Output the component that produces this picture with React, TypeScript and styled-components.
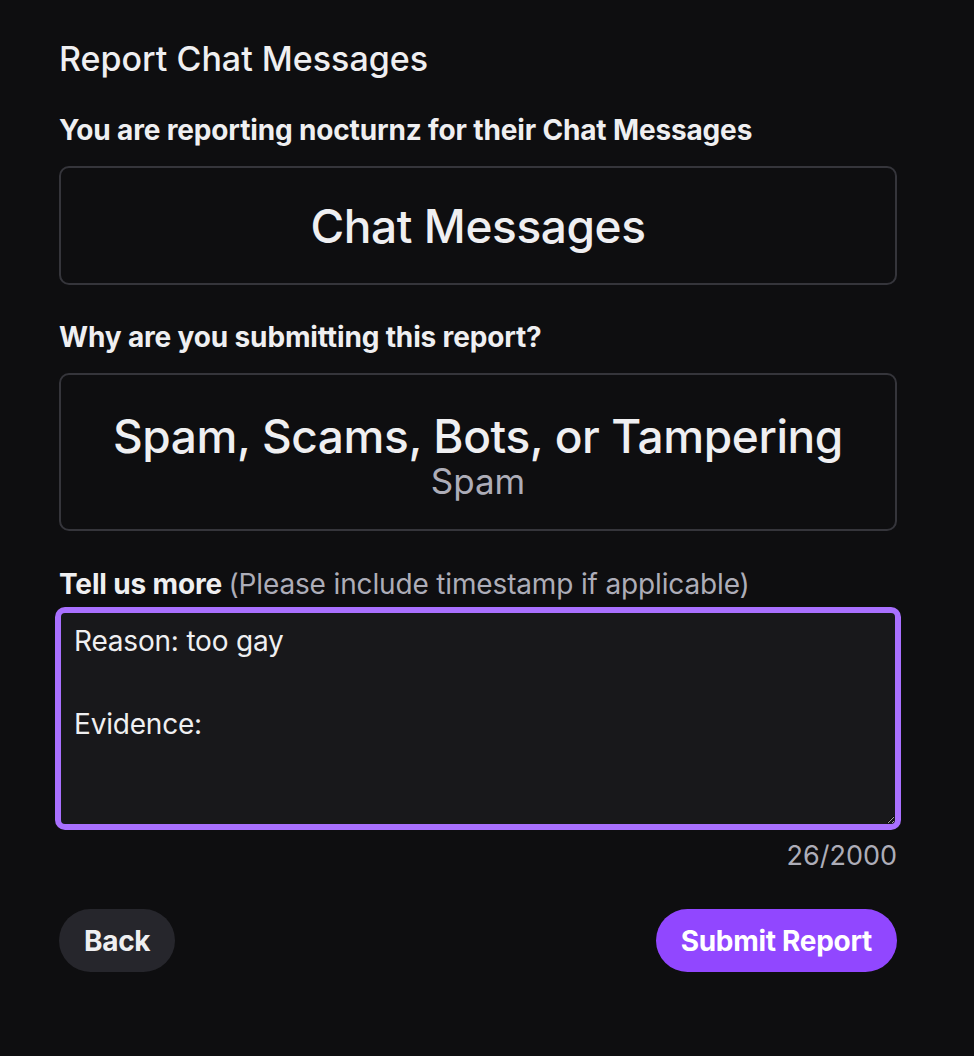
import React from 'react'
import styled, { createGlobalStyle } from 'styled-components'

const GlobalStyle = createGlobalStyle`
  html, body {
    margin: 0;
    padding: 0;
    background: #0e0e10;
  }
  body {
    font-family: Inter, "Noto Sans", sans-serif;
    color: #efeff1;
  }
`

const Page = styled.div`
  min-height: 1056px;
  background: #0e0e10;
  padding: 39px 0 0 59px;
  box-sizing: border-box;
`

const Form = styled.div`
  width: 838px;
  display: flex;
  flex-direction: column;
`

const Title = styled.h1`
  margin: 0;
  font-size: 34px;
  line-height: 40px;
  font-weight: 500;
`

const Label = styled.div<{ $gap: number }>`
  margin-top: ${(p) => p.$gap}px;
  font-size: 28px;
  line-height: 32px;
  font-weight: 700;
  letter-spacing: -0.15px;
`

const Hint = styled.span`
  font-weight: 400;
  color: #adadb8;
`

const Card = styled.div<{ $height: number; $shift?: number }>`
  margin-top: 20px;
  height: ${(p) => p.$height}px;
  padding-top: ${(p) => p.$shift ?? 0}px;
  border: 2px solid #35353b;
  border-radius: 10px;
  box-sizing: border-box;
  display: flex;
  flex-direction: column;
  align-items: center;
  justify-content: center;
`

const CardTitle = styled.div`
  font-size: 46px;
  line-height: 50px;
  font-weight: 500;
  letter-spacing: -0.4px;
`

const CardSub = styled.div`
  font-size: 35px;
  line-height: 40px;
  font-weight: 400;
  color: #adadb8;
`

const TextArea = styled.textarea`
  margin-top: 11px;
  height: 215px;
  box-sizing: border-box;
  background: #18181b;
  color: #efeff1;
  border: 2px solid #a970ff;
  box-shadow: 0 0 0 4px #a970ff;
  border-radius: 6px;
  padding: 8px 13px;
  font-family: Inter, "Noto Sans", sans-serif;
  font-size: 28px;
  line-height: 41.5px;
  letter-spacing: -0.2px;
  outline: none;
  resize: vertical;
`

const Counter = styled.div`
  margin-top: 15px;
  text-align: right;
  font-size: 27px;
  line-height: 30px;
  color: #adadb8;
`

const Actions = styled.div`
  margin-top: 38px;
  display: flex;
  justify-content: space-between;
  align-items: center;
`

const Button = styled.button<{ $primary?: boolean }>`
  height: 63px;
  padding: 0 25px;
  border: none;
  border-radius: 32px;
  background: ${(p) => (p.$primary ? '#9147ff' : '#26262c')};
  color: ${(p) => (p.$primary ? '#ffffff' : '#efeff1')};
  font-family: Inter, "Noto Sans", sans-serif;
  font-size: 28px;
  font-weight: 700;
  letter-spacing: -0.3px;
  cursor: pointer;
`

const App: React.FC = () => {
  const text = 'Reason: too gay\n\nEvidence:'
  return (
    <>
      <GlobalStyle />
      <Page>
        <Form>
          <Title>Report Chat Messages</Title>
          <Label $gap={35}>You are reporting nocturnz for their Chat Messages</Label>
          <Card $height={119}>
            <CardTitle>Chat Messages</CardTitle>
          </Card>
          <Label $gap={36}>Why are you submitting this report?</Label>
          <Card $height={158} $shift={8}>
            <CardTitle>Spam, Scams, Bots, or Tampering</CardTitle>
            <CardSub>Spam</CardSub>
          </Card>
          <Label $gap={37}>
            Tell us more <Hint>(Please include timestamp if applicable)</Hint>
          </Label>
          <TextArea defaultValue={text} />
          <Counter>{text.length}/2000</Counter>
          <Actions>
            <Button>Back</Button>
            <Button $primary>Submit Report</Button>
          </Actions>
        </Form>
      </Page>
    </>
  )
}

export default App
